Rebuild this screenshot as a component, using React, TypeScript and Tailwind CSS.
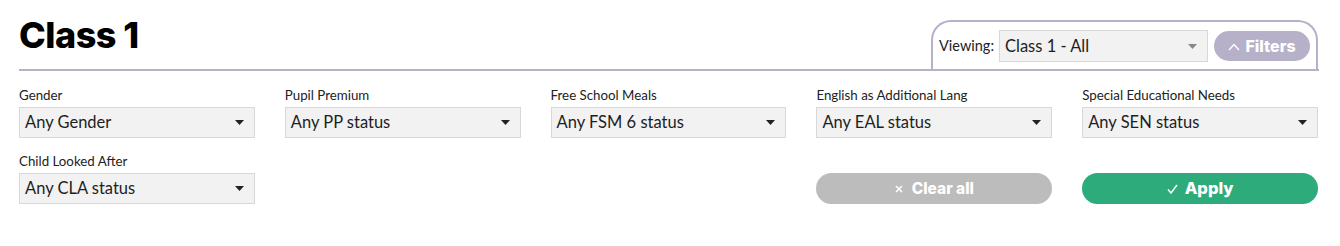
import React from 'react';

type Filter = { label: string; value: string };

const filters: Filter[] = [
  { label: 'Gender', value: 'Any Gender' },
  { label: 'Pupil Premium', value: 'Any PP status' },
  { label: 'Free School Meals', value: 'Any FSM 6 status' },
  { label: 'English as Additional Lang', value: 'Any EAL status' },
  { label: 'Special Educational Needs', value: 'Any SEN status' },
  { label: 'Child Looked After', value: 'Any CLA status' },
];

// little down-pointing caret used in the selects
function Caret({ className }: { className?: string }) {
  return (
    <svg width="9" height="5" viewBox="0 0 9 5" className={className}>
      <path d="M0 0h9L4.5 5z" fill="currentColor" />
    </svg>
  );
}

function FakeSelect({ value, className, caret = 'text-[#222]' }: { value: string; className?: string; caret?: string }) {
  return (
    <div
      className={`flex items-center justify-between border border-[#d8d8d8] bg-[#f2f2f2] pl-[5px] pr-[10px] text-[16.5px] text-[#1e1e1e] ${className ?? ''}`}
    >
      <span className="leading-none">{value}</span>
      <Caret className={caret} />
    </div>
  );
}

function Field({ label, value }: Filter) {
  return (
    <div className="flex flex-col">
      <label className="mb-[3px] text-[13.3px] leading-[17px] text-[#222]">{label}</label>
      <FakeSelect value={value} className="h-[31px]" />
    </div>
  );
}

export default function App() {
  return (
    <div className="w-[1340px] h-[246px] bg-white font-['Lato',sans-serif]">
      <div className="ml-[19px] w-[1300px]">
        {/* Header with title and viewing tab */}
        <div className="flex items-end justify-between border-b-2 border-[#b6b1c9] h-[71px]">
          <h1 className="mb-[16px] font-['Inter',sans-serif] text-[36px] font-extrabold leading-none tracking-[-0.5px] text-black">
            Class 1
          </h1>
          <div className="mr-[1px] flex h-[49px] w-[387px] items-center rounded-t-[20px] border-2 border-b-0 border-[#b6b1c9] pl-[6px] pr-[6px] pt-[1px]">
            <span className="w-[60px] text-[14.5px] text-[#222]">Viewing:</span>
            <FakeSelect value="Class 1 - All" className="h-[32px] w-[209px]" caret="text-[#888]" />
            <button className="ml-[6px] flex h-[30px] w-[96px] items-center justify-center gap-[5px] rounded-full bg-[#b6b1c9] font-['Inter',sans-serif] text-[16px] font-extrabold text-white">
              <svg width="12" height="8" viewBox="0 0 12 8" className="mt-[1px]">
                <path d="M1 7l5-5.5L11 7" fill="none" stroke="currentColor" strokeWidth="1.4" />
              </svg>
              Filters
            </button>
          </div>
        </div>

        {/* Filter fields */}
        <div className="mt-[16px] grid grid-cols-5 gap-x-[30px] gap-y-[15px] pr-[1px]">
          {filters.slice(0, 5).map(f => (
            <Field key={f.label} {...f} />
          ))}
          <Field {...filters[5]} />
          <div />
          <div />
          <div className="flex items-end">
            <button className="flex h-[31px] w-full items-center justify-center gap-[9px] rounded-full bg-[#bcbcbd] font-['Inter',sans-serif] text-[15.5px] font-extrabold text-white">
              <svg width="8" height="8" viewBox="0 0 8 8" className="mt-[1px]">
                <path d="M1 1l6 6M7 1L1 7" stroke="currentColor" strokeWidth="1.6" />
              </svg>
              Clear all
            </button>
          </div>
          <div className="flex items-end">
            <button className="flex h-[31px] w-full items-center justify-center gap-[7px] rounded-full bg-[#2eab7b] font-['Inter',sans-serif] text-[16.5px] font-extrabold text-white">
              <svg width="11" height="10" viewBox="0 0 11 10" className="mt-[1px]">
                <path d="M1 5.5l3 3.5L10 1" fill="none" stroke="currentColor" strokeWidth="1.5" />
              </svg>
              Apply
            </button>
          </div>
        </div>
      </div>
    </div>
  );
}
